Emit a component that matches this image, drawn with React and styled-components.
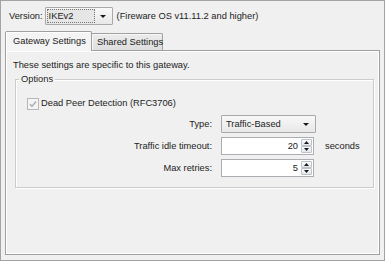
import React from 'react'
import styled, { createGlobalStyle } from 'styled-components'

const GlobalStyle = createGlobalStyle`
  html, body {
    margin: 0;
    padding: 0;
    background: #f0f0f0;
  }
  body {
    font-family: "Liberation Sans", Arial, sans-serif;
    font-size: 9.3px;
    line-height: 11px;
    color: #222222;
  }
`

const Frame = styled.div`
  width: 385px;
  height: 261px;
  box-sizing: border-box;
  border: 1px solid #a3a3a3;
  background: #f0f0f0;
  padding: 6px 4px 5px 4px;
  display: flex;
  flex-direction: column;
`

const VersionRow = styled.div`
  height: 18px;
  display: flex;
  align-items: center;
  padding-left: 4px;
`

const Label = styled.span`
  white-space: nowrap;
`

const Note = styled.span`
  margin-left: 4px;
  white-space: nowrap;
`

const Combo = styled.div`
  width: ${p => p.$width}px;
  height: 18px;
  margin-left: ${p => p.$gap || 0}px;
  box-sizing: border-box;
  border: 1px solid #a9a9a9;
  border-radius: 1px;
  background: linear-gradient(#f8f8f8, #e8e8e8);
  display: flex;
  align-items: center;
  padding: 1px;
`

const ComboValue = styled.div`
  flex: 1;
  height: 100%;
  box-sizing: border-box;
  display: flex;
  align-items: center;
  padding-left: ${p => (p.$focused ? 1 : 2)}px;
  border: 1px dotted ${p => (p.$focused ? '#777777' : 'transparent')};
  background: ${p => (p.$focused ? '#e6e6e6' : 'transparent')};
`

const ComboArrow = styled.div`
  width: 16px;
  display: flex;
  justify-content: center;
  align-items: center;
`

const TabStrip = styled.div`
  margin-top: 6px;
  height: 19px;
  display: flex;
  align-items: flex-end;
  position: relative;
  z-index: 1;
`

const Tab = styled.div`
  box-sizing: border-box;
  width: ${p => p.$width}px;
  height: ${p => (p.$active ? 20 : 17)}px;
  margin-bottom: ${p => (p.$active ? -1 : 0)}px;
  margin-left: ${p => (p.$active ? 0 : -1)}px;
  border: 1px solid #a0a0a0;
  border-bottom: none;
  border-radius: 2px 2px 0 0;
  background: ${p => (p.$active ? '#f4f4f4' : 'linear-gradient(#ececec, #dedede)')};
  box-shadow: ${p => (p.$active ? 'inset 1px 1px 0 #ffffff' : 'inset 1px 1px 0 #f7f7f7')};
  display: flex;
  align-items: center;
  padding-left: ${p => (p.$active ? 7 : 5)}px;
  padding-top: ${p => (p.$active ? 0 : 1)}px;
  white-space: nowrap;
`

const Panel = styled.div`
  flex: 1;
  border: 1px solid #a0a0a0;
  box-shadow: inset 1px 1px 0 #ffffff, inset -1px -1px 0 #ffffff;
  background: #f0f0f0;
  padding: 9px 5px 0 7px;
`

const Intro = styled.div`
  white-space: nowrap;
`

const Group = styled.fieldset`
  margin: 3px 0 0 2px;
  padding: 0;
  min-width: 0;
  border: 1px solid #cbcbcb;
  box-shadow: 1px 1px 0 #ffffff, inset 1px 1px 0 #ffffff;
`

const Legend = styled.legend`
  margin-left: 3px;
  padding: 0 2px;
  line-height: 11px;
`

const GroupBody = styled.div`
  padding: 12px 0 10px 11px;
`

const CheckRow = styled.label`
  display: flex;
  align-items: center;
  height: 13px;
  gap: 2px;
`

const CheckBox = styled.span`
  width: 12px;
  height: 12px;
  box-sizing: border-box;
  border: 1px solid #b8b8b8;
  background: #f4f4f4;
  display: flex;
  align-items: center;
  justify-content: center;
`

const FormGrid = styled.div`
  margin-top: 5px;
  display: grid;
  grid-template-columns: 185px 95px auto;
  grid-auto-rows: 18px;
  column-gap: 9px;
  row-gap: 4px;
  align-items: center;
`

const FieldLabel = styled.span`
  text-align: right;
  white-space: nowrap;
`

const Spinner = styled.div`
  width: 93px;
  height: 18px;
  box-sizing: border-box;
  border: 1px solid #abadb3;
  background: #ffffff;
  display: flex;
  align-items: stretch;
`

const SpinValue = styled.div`
  flex: 1;
  display: flex;
  align-items: center;
  justify-content: flex-end;
  padding-right: 3px;
`

const SpinButtons = styled.div`
  width: 11px;
  padding: 1px 1px 1px 0;
  display: flex;
  flex-direction: column;
`

const SpinButton = styled.div`
  flex: 1;
  box-sizing: border-box;
  border: 1px solid #bcc2ca;
  border-radius: 1px;
  background: linear-gradient(#fafafa, #e4e8ec);
  display: flex;
  align-items: center;
  justify-content: center;
`

const Unit = styled.span`
  white-space: nowrap;
`

function Arrow({ dir = 'down', size = 7 }) {
  const h = Math.ceil(size / 2)
  const points =
    dir === 'down'
      ? `0,0 ${size},0 ${size / 2},${h}`
      : `0,${h} ${size},${h} ${size / 2},0`
  return (
    <svg width={size} height={h} viewBox={`0 0 ${size} ${h}`}>
      <polygon points={points} fill="#1a1a1a" />
    </svg>
  )
}

function Select({ value, width, gap, focused }) {
  return (
    <Combo $width={width} $gap={gap}>
      <ComboValue $focused={focused}>{value}</ComboValue>
      <ComboArrow>
        <Arrow size={6} />
      </ComboArrow>
    </Combo>
  )
}

function NumberField({ value }) {
  return (
    <Spinner>
      <SpinValue>{value}</SpinValue>
      <SpinButtons>
        <SpinButton>
          <Arrow dir="up" size={5} />
        </SpinButton>
        <SpinButton>
          <Arrow dir="down" size={5} />
        </SpinButton>
      </SpinButtons>
    </Spinner>
  )
}

export default function App() {
  return (
    <>
      <GlobalStyle />
      <Frame>
        <VersionRow>
          <Label>Version:</Label>
          <Select value="IKEv2" width={68} gap={2} focused />
          <Note>(Fireware OS v11.11.2 and higher)</Note>
        </VersionRow>

        <TabStrip>
          <Tab $active $width={87}>Gateway Settings</Tab>
          <Tab $width={72}>Shared Settings</Tab>
        </TabStrip>

        <Panel>
          <Intro>These settings are specific to this gateway.</Intro>
          <Group>
            <Legend>Options</Legend>
            <GroupBody>
              <CheckRow>
                <CheckBox>
                  <svg width="8" height="8" viewBox="0 0 8 8">
                    <path d="M1 4.2 L3 6.3 L7 1.5" fill="none" stroke="#a8a8a8" strokeWidth="1.3" />
                  </svg>
                </CheckBox>
                Dead Peer Detection (RFC3706)
              </CheckRow>

              <FormGrid>
                <FieldLabel>Type:</FieldLabel>
                <Select value="Traffic-Based" width={95} />
                <span />

                <FieldLabel>Traffic idle timeout:</FieldLabel>
                <NumberField value="20" />
                <Unit>seconds</Unit>

                <FieldLabel>Max retries:</FieldLabel>
                <NumberField value="5" />
                <span />
              </FormGrid>
            </GroupBody>
          </Group>
        </Panel>
      </Frame>
    </>
  )
}
